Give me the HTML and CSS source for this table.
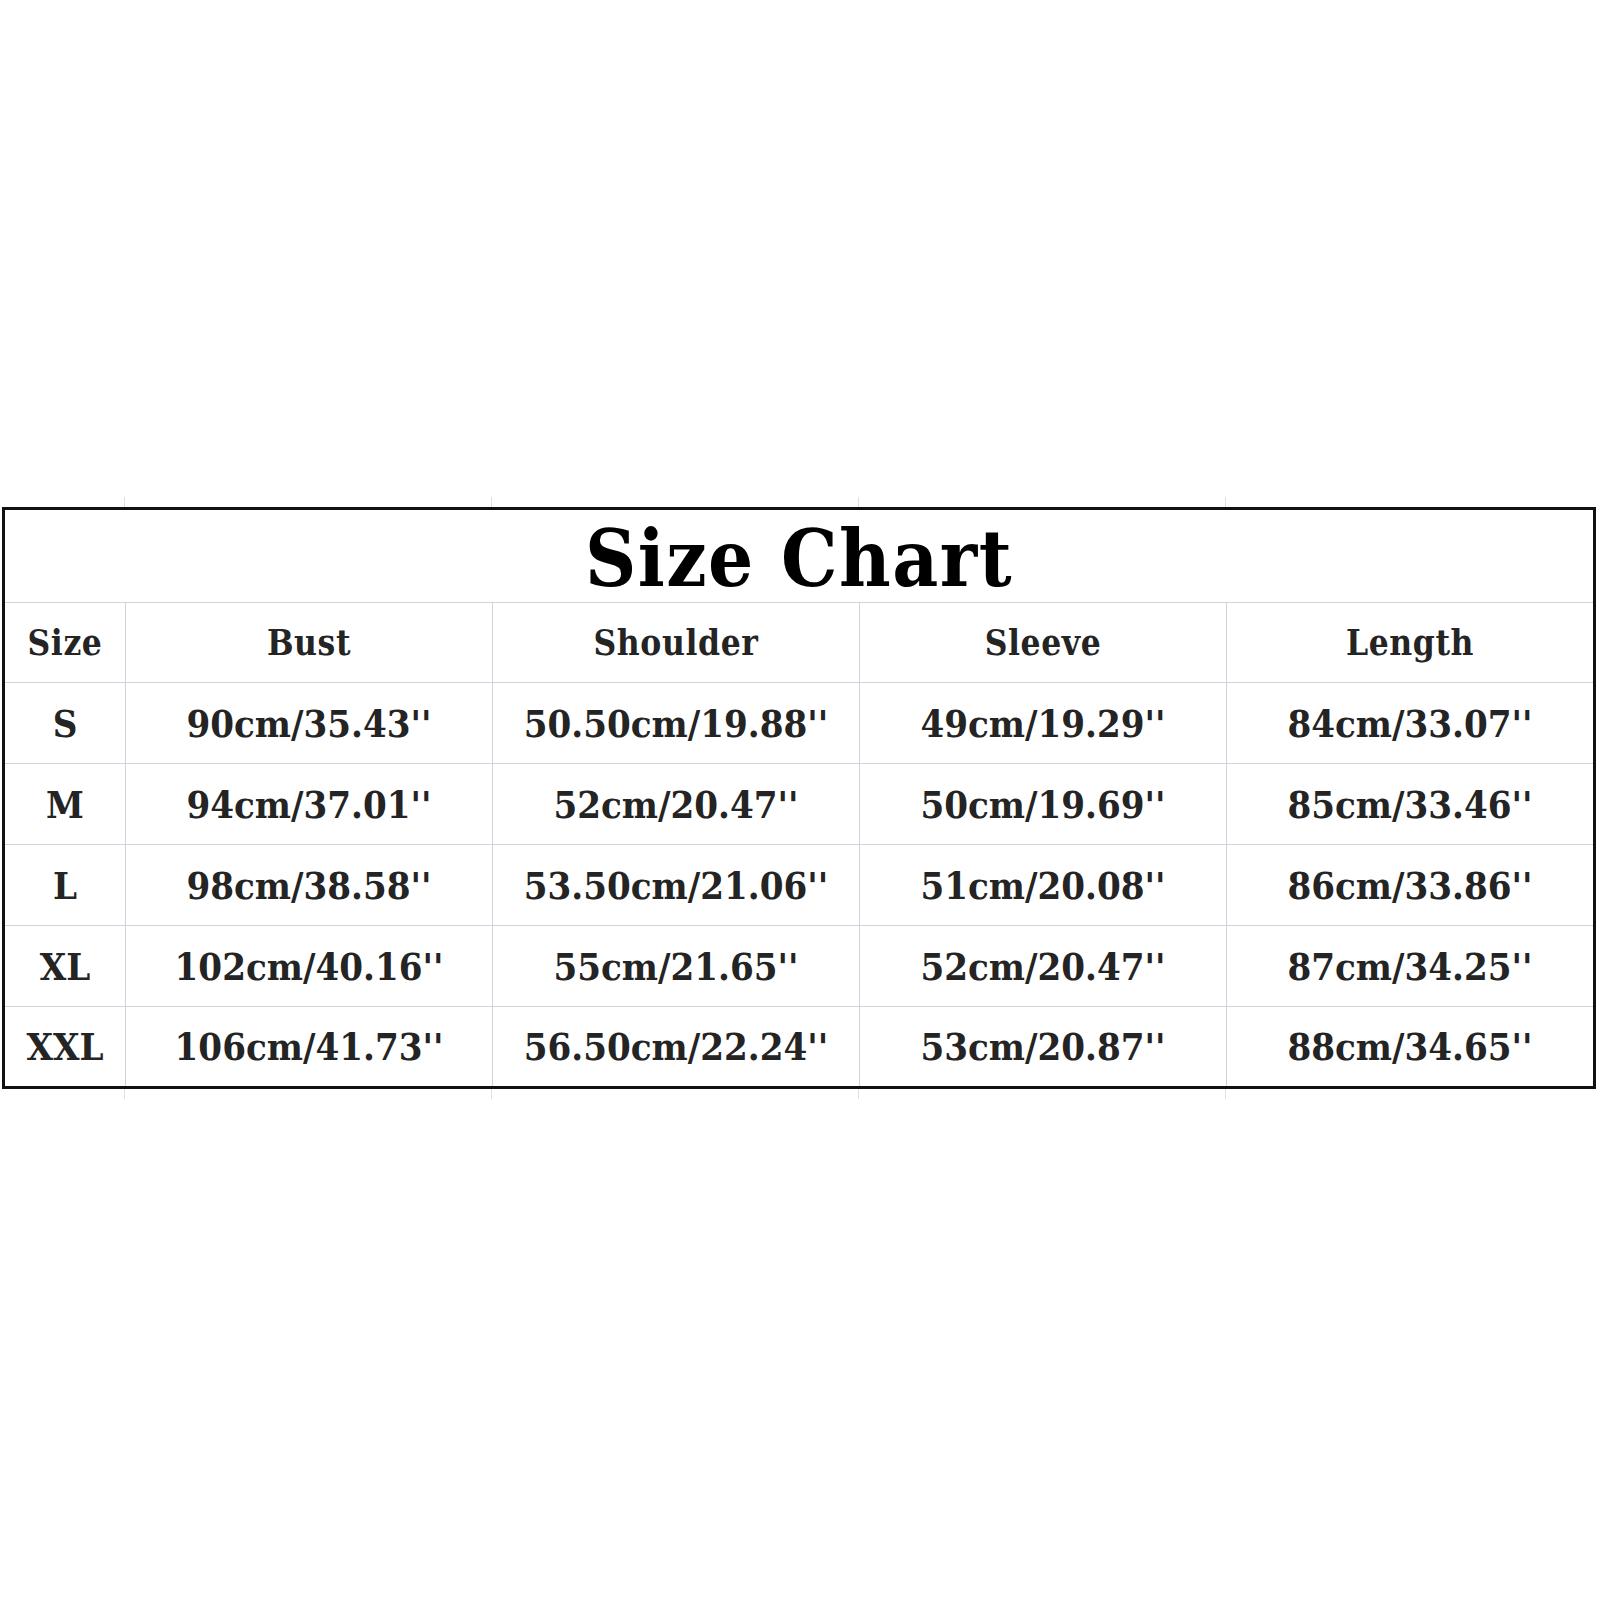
FILE: index.html
```html
<!DOCTYPE html>
<html lang="en">
<head>
<meta charset="utf-8">
<title>Size Chart</title>
<link rel="stylesheet" href="styles.css">
</head>
<body>
<div class="page">
  <div class="ticks"><span></span><span></span><span></span><span></span><span></span></div>
  <div class="chart">
    <div class="title">Size Chart</div>
    <div class="cell head">Size</div>
    <div class="cell head">Bust</div>
    <div class="cell head">Shoulder</div>
    <div class="cell head">Sleeve</div>
    <div class="cell head last">Length</div>

    <div class="cell">S</div>
    <div class="cell">90cm/35.43''</div>
    <div class="cell">50.50cm/19.88''</div>
    <div class="cell">49cm/19.29''</div>
    <div class="cell last">84cm/33.07''</div>

    <div class="cell">M</div>
    <div class="cell">94cm/37.01''</div>
    <div class="cell">52cm/20.47''</div>
    <div class="cell">50cm/19.69''</div>
    <div class="cell last">85cm/33.46''</div>

    <div class="cell">L</div>
    <div class="cell">98cm/38.58''</div>
    <div class="cell">53.50cm/21.06''</div>
    <div class="cell">51cm/20.08''</div>
    <div class="cell last">86cm/33.86''</div>

    <div class="cell">XL</div>
    <div class="cell">102cm/40.16''</div>
    <div class="cell">55cm/21.65''</div>
    <div class="cell">52cm/20.47''</div>
    <div class="cell last">87cm/34.25''</div>

    <div class="cell bottom">XXL</div>
    <div class="cell bottom">106cm/41.73''</div>
    <div class="cell bottom">56.50cm/22.24''</div>
    <div class="cell bottom">53cm/20.87''</div>
    <div class="cell bottom last">88cm/34.65''</div>
  </div>
  <div class="ticks"><span></span><span></span><span></span><span></span><span></span></div>
</div>
</body>
</html>
```
FILE: styles.css
```css
html, body {
  margin: 0;
  padding: 0;
  background: #ffffff;
}

.page {
  width: 1600px;
  height: 1600px;
  padding: 497px 0 0 2px;
  box-sizing: border-box;
  font-family: "DejaVu Serif", "Liberation Serif", serif;
  font-weight: bold;
  font-stretch: condensed;
  color: #242424;
}

.ticks {
  width: 1594px;
  height: 10px;
  display: grid;
  grid-template-columns: 123px 367px 367px 367px 370px;
}

.ticks span {
  border-right: 1px solid #dde0e6;
}

.ticks span:last-child {
  border-right: none;
}

.chart {
  width: 1594px;
  height: 582px;
  box-sizing: border-box;
  border: 3px solid #111111;
  display: grid;
  grid-template-columns: 121px 367px 367px 367px 366px;
  grid-template-rows: 93px 80px 81px 81px 81px 81px 79px;
}

.title {
  grid-column: 1 / -1;
  display: flex;
  align-items: center;
  justify-content: center;
  font-size: 79px;
  letter-spacing: 1.5px;
  color: #000000;
  border-bottom: 1px solid #cfd3dc;
  padding-top: 4px;
}

.cell {
  display: flex;
  align-items: center;
  justify-content: center;
  box-sizing: border-box;
  border-right: 1px solid #cfd3dc;
  border-bottom: 1px solid #cfd3dc;
  font-size: 38px;
  white-space: nowrap;
}

.cell.head {
  font-size: 35px;
  letter-spacing: 0.6px;
}

.cell.last {
  border-right: none;
}

.cell.bottom {
  border-bottom: none;
}
```
